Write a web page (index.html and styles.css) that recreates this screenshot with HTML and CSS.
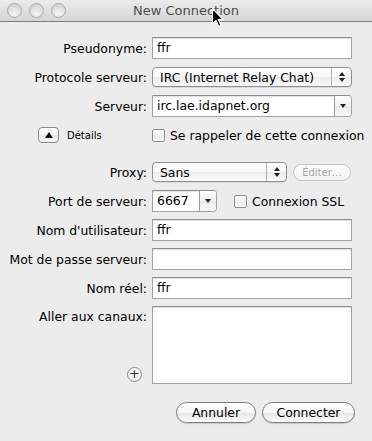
FILE: index.html
```html
<!DOCTYPE html>
<html lang="fr">
<head>
    <meta charset="UTF-8">
    <title>New Connection</title>
    <link rel="stylesheet" href="styles.css">
</head>
<body>
    <div class="window">
        <div class="titlebar">
            <div class="lights">
                <span class="light"></span>
                <span class="light"></span>
                <span class="light"></span>
            </div>
            <div class="title">New Connection</div>
            <svg class="cursor" width="14" height="22" viewBox="0 0 14 22">
                <path d="M1.5 1.5 L1.5 17 L5 13.5 L7.6 19.6 L10 18.6 L7.4 12.6 L12.2 12.6 Z" fill="#000" stroke="#fff" stroke-width="1.2" stroke-linejoin="round"/>
            </svg>
        </div>

        <div class="content">
            <div class="row">
                <span class="label">Pseudonyme:</span>
                <div class="field wide">ffr</div>
            </div>

            <div class="row">
                <span class="label">Protocole serveur:</span>
                <div class="popup wide">
                    <span class="popup-text">IRC (Internet Relay Chat)</span>
                    <span class="popup-arrows"><i class="up"></i><i class="down"></i></span>
                </div>
            </div>

            <div class="row">
                <span class="label">Serveur:</span>
                <div class="combo wide">
                    <span class="combo-text">irc.lae.idapnet.org</span>
                    <span class="combo-btn"><i class="down"></i></span>
                </div>
            </div>

            <div class="row details-row">
                <div class="label details">
                    <span class="disclosure"><i class="tri-up"></i></span>
                    <span class="details-text">Détails</span>
                </div>
                <label class="check">
                    <span class="box"></span>
                    <span>Se rappeler de cette connexion</span>
                </label>
            </div>

            <div class="row">
                <span class="label">Proxy:</span>
                <div class="popup proxy">
                    <span class="popup-text">Sans</span>
                    <span class="popup-arrows"><i class="up"></i><i class="down"></i></span>
                </div>
                <span class="edit-btn">Éditer…</span>
            </div>

            <div class="row">
                <span class="label">Port de serveur:</span>
                <div class="combo port">
                    <span class="combo-text">6667</span>
                    <span class="combo-btn"><i class="down"></i></span>
                </div>
                <label class="check ssl">
                    <span class="box"></span>
                    <span>Connexion SSL</span>
                </label>
            </div>

            <div class="row">
                <span class="label">Nom d'utilisateur:</span>
                <div class="field wide">ffr</div>
            </div>

            <div class="row">
                <span class="label">Mot de passe serveur:</span>
                <div class="field wide"></div>
            </div>

            <div class="row">
                <span class="label">Nom réel:</span>
                <div class="field wide">ffr</div>
            </div>

            <div class="row channels-row">
                <div class="label channels-label">
                    <span>Aller aux canaux:</span>
                    <span class="plus">+</span>
                </div>
                <div class="field wide channels"></div>
            </div>

            <div class="actions">
                <button class="push cancel">Annuler</button>
                <button class="push connect">Connecter</button>
            </div>
        </div>
    </div>
</body>
</html>
```

FILE: styles.css
```css
* {
    margin: 0;
    padding: 0;
    box-sizing: border-box;
}

body {
    font-family: "DejaVu Sans", "Liberation Sans", sans-serif;
    font-size: 12.4px;
    color: #000;
    background: #ececec;
}

.window {
    width: 372px;
    height: 441px;
    background: #ececec;
}

/* title bar */

.titlebar {
    position: relative;
    height: 22px;
    background: linear-gradient(#ebebeb, #d5d5d5);
    border-bottom: 1px solid #7f7f7f;
    display: flex;
    align-items: center;
}

.lights {
    display: flex;
    gap: 7px;
    padding-left: 7px;
}

.light {
    width: 15px;
    height: 15px;
    border-radius: 50%;
    border: 1px solid #ababab;
    background: radial-gradient(circle at 50% 75%, #f6f6f6 0%, #dedede 55%, #c8c8c8 100%);
}

.title {
    position: absolute;
    left: 0;
    right: 0;
    text-align: center;
    font-size: 13px;
    color: #4d4d4d;
}

.cursor {
    position: absolute;
    left: 211px;
    top: 7px;
}

/* form */

.content {
    padding-top: 15px;
}

.row {
    display: flex;
    align-items: center;
    height: 22px;
    margin-bottom: 7px;
}

.label {
    width: 147px;
    margin-right: 5px;
    text-align: right;
    flex-shrink: 0;
}

.wide {
    width: 200px;
}

.field {
    height: 22px;
    background: #fff;
    border: 1px solid #a3a3a3;
    border-top-color: #8a8a8a;
    box-shadow: inset 0 1px 1px rgba(0, 0, 0, 0.12);
    padding: 0 4px;
    line-height: 20px;
}

.popup {
    height: 20px;
    display: flex;
    align-items: center;
    border: 1px solid #8e8e8e;
    border-radius: 4px;
    background: linear-gradient(#ffffff 0%, #f7f7f7 50%, #ececec 51%, #f9f9f9 100%);
    box-shadow: 0 1px 0 rgba(0, 0, 0, 0.08);
}

.popup-text {
    flex: 1;
    padding-left: 7px;
}

.popup-arrows {
    width: 20px;
    height: 100%;
    border-left: 1px solid #b4b4b4;
    display: flex;
    flex-direction: column;
    align-items: center;
    justify-content: center;
    gap: 2px;
}

.up {
    width: 0;
    height: 0;
    border-left: 3px solid transparent;
    border-right: 3px solid transparent;
    border-bottom: 4px solid #222;
}

.down {
    width: 0;
    height: 0;
    border-left: 3px solid transparent;
    border-right: 3px solid transparent;
    border-top: 4px solid #222;
}

.proxy {
    width: 135px;
}

.combo {
    height: 22px;
    display: flex;
    background: #fff;
    border: 1px solid #a3a3a3;
    border-top-color: #8a8a8a;
    border-radius: 0 4px 4px 0;
    box-shadow: inset 0 1px 1px rgba(0, 0, 0, 0.12);
}

.combo-text {
    flex: 1;
    padding-left: 4px;
    line-height: 20px;
}

.combo-btn {
    width: 17px;
    border-left: 1px solid #9c9c9c;
    border-radius: 0 3px 3px 0;
    background: linear-gradient(#ffffff, #f2f2f2 50%, #e8e8e8 51%, #f8f8f8);
    display: flex;
    align-items: center;
    justify-content: center;
}

.port {
    width: 65px;
}

/* details row */

.details-row {
    margin-bottom: 15px;
}

.details {
    display: flex;
    align-items: center;
    padding-left: 38px;
    text-align: left;
}

.disclosure {
    width: 21px;
    height: 16px;
    border: 1px solid #8a8a8a;
    border-radius: 4px;
    background: linear-gradient(#ffffff, #f3f3f3 50%, #e6e6e6 51%, #fbfbfb);
    display: flex;
    align-items: center;
    justify-content: center;
}

.tri-up {
    width: 0;
    height: 0;
    border-left: 4px solid transparent;
    border-right: 4px solid transparent;
    border-bottom: 6px solid #111;
}

.details-text {
    font-size: 10px;
    margin-left: 8px;
}

.check {
    display: flex;
    align-items: center;
    gap: 5px;
}

.box {
    width: 13px;
    height: 13px;
    border: 1px solid #8d8d8d;
    border-radius: 2px;
    background: linear-gradient(#ffffff, #f0f0f0 50%, #e6e6e6 51%, #fafafa);
}

.ssl {
    margin-left: 17px;
}

.edit-btn {
    margin-left: 6px;
    width: 58px;
    height: 17px;
    border: 1px solid #c2c2c2;
    border-radius: 9px;
    background: linear-gradient(#fdfdfd, #f1f1f1);
    color: #a6a6a6;
    font-size: 10px;
    line-height: 15px;
    text-align: center;
}

/* channels */

.channels-row {
    height: 78px;
    align-items: stretch;
    margin-bottom: 18px;
}

.channels {
    height: 78px;
}

.channels-label {
    display: flex;
    flex-direction: column;
    justify-content: space-between;
    align-items: flex-end;
    padding-top: 3px;
}

.plus {
    width: 15px;
    height: 15px;
    margin-right: 5px;
    margin-bottom: 2px;
    border: 1px solid #8a8a8a;
    border-radius: 50%;
    background: linear-gradient(#ffffff, #e9e9e9);
    font-size: 13px;
    line-height: 12px;
    text-align: center;
    color: #333;
}

/* buttons */

.actions {
    display: flex;
    justify-content: flex-end;
    gap: 6px;
    padding-right: 17px;
}

.push {
    font-family: inherit;
    font-size: 12.4px;
    color: #000;
    height: 21px;
    border: 1px solid #7c7c7c;
    border-radius: 11px;
    background: linear-gradient(#ffffff 0%, #f5f5f5 50%, #e6e6e6 51%, #fbfbfb 100%);
    box-shadow: 0 1px 1px rgba(0, 0, 0, 0.15);
}

.cancel {
    width: 80px;
}

.connect {
    width: 93px;
}
```
